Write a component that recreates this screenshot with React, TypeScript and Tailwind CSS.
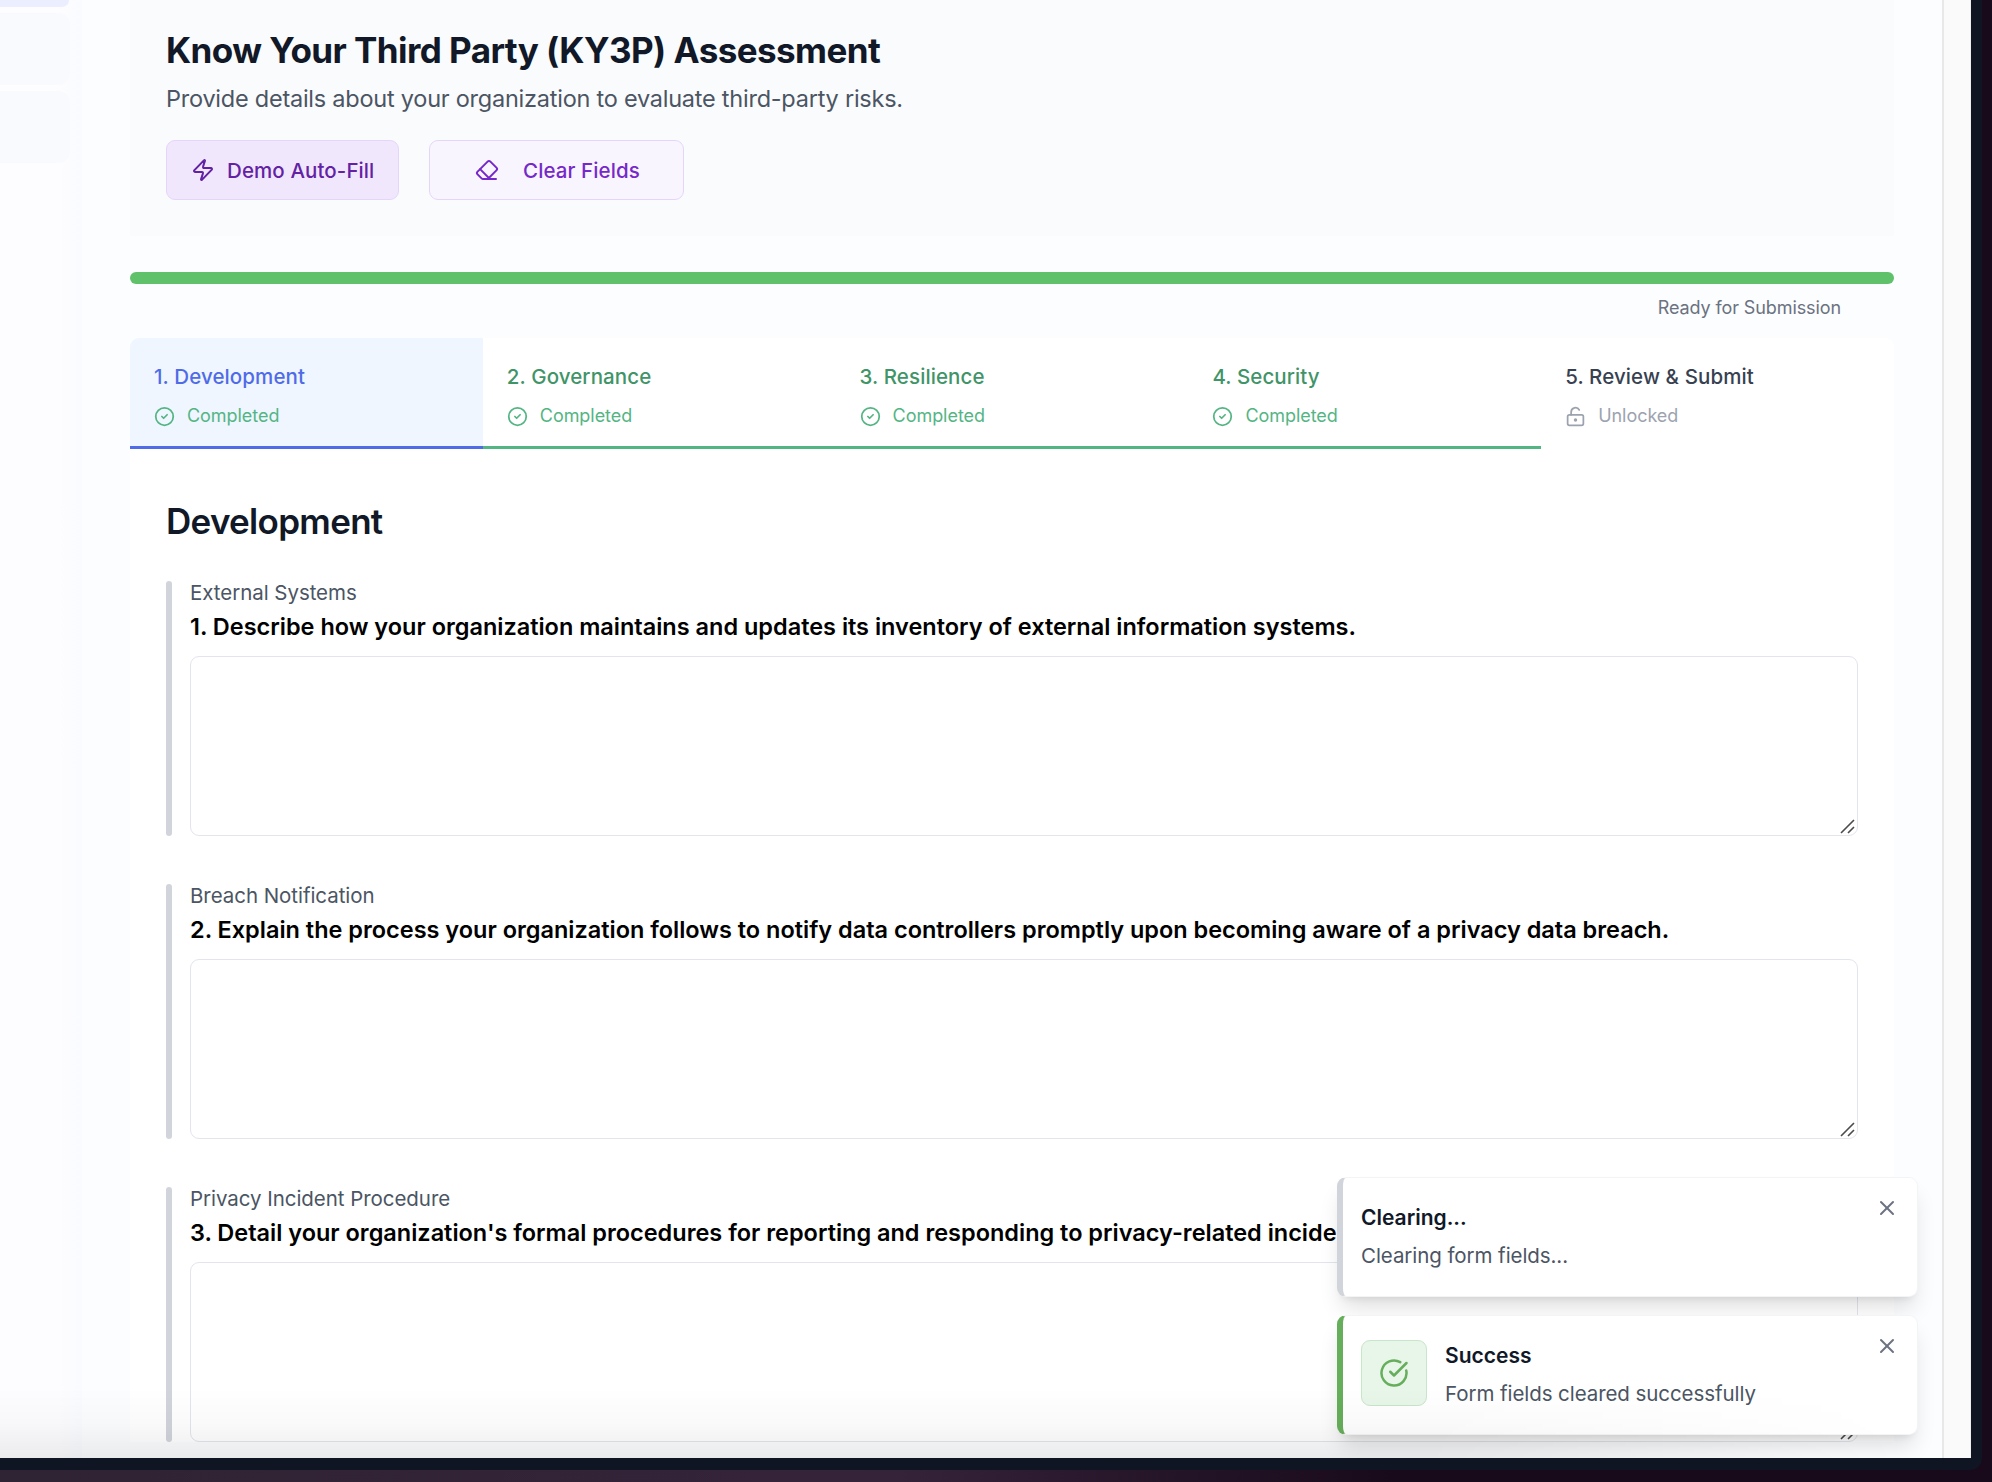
import React from "react";
import { CircleCheck, CircleCheckBig, Eraser, LockKeyholeOpen, X, Zap } from "lucide-react";

const tabs = [
  { title: "1. Development", state: "active" },
  { title: "2. Governance", state: "done" },
  { title: "3. Resilience", state: "done" },
  { title: "4. Security", state: "done" },
  { title: "5. Review & Submit", state: "open" },
];

const questions = [
  { label: "External Systems", text: "1. Describe how your organization maintains and updates its inventory of external information systems." },
  { label: "Breach Notification", text: "2. Explain the process your organization follows to notify data controllers promptly upon becoming aware of a privacy data breach." },
  { label: "Privacy Incident Procedure", text: "3. Detail your organization's formal procedures for reporting and responding to privacy-related incidents." },
];

function Sidebar() {
  return (
    <aside className="flex w-[82px] shrink-0 flex-col bg-linear-to-r from-[#fdfdff] from-70% to-[#fafbff]">
      <div className="h-[7px] w-[69px] rounded-br-xl bg-[#eaeeff]" />
      <div className="mt-[6px] h-[72px] w-[70px] rounded-r-xl bg-[#f9fafd]" />
      <div className="mt-[6px] h-[72px] w-[70px] rounded-r-xl bg-[#f9fafd]" />
    </aside>
  );
}

function Header() {
  return (
    <header className="h-[236px] shrink-0 bg-[#fafbfd] px-9 pt-[25px]">
      <h1 className="text-[35px] leading-[50px] font-bold tracking-[-0.56px] whitespace-nowrap text-[#111827]">
        Know Your Third Party (KY3P) Assessment
      </h1>
      <p className="mt-[6px] text-[23.5px] leading-[36px] tracking-[-0.24px] whitespace-nowrap text-[#4b5563]">
        Provide details about your organization to evaluate third-party risks.
      </p>
      <div className="mt-[23px] flex gap-[30px]">
        <button className="flex h-[60px] w-[233px] items-center gap-3 rounded-[9px] border border-[#e6d5fb] bg-[#f1e7fd] pl-6 text-[20.5px] font-medium tracking-[0.1px] whitespace-nowrap text-[#6322a3]">
          <Zap size={24} />
          <span className="pt-[2px]">Demo Auto-Fill</span>
        </button>
        <button className="flex h-[60px] w-[255px] items-center gap-6 rounded-[9px] border border-[#e6d5fb] bg-[#f9f5ff] pl-[45px] text-[20.5px] font-medium tracking-[0.1px] whitespace-nowrap text-[#7629c9]">
          <Eraser size={24} />
          <span className="pt-[2px]">Clear Fields</span>
        </button>
      </div>
    </header>
  );
}

function Tab({ title, state }: { title: string; state: string }) {
  const box =
    state === "active"
      ? "rounded-tl-[9px] border-[#4f6be8] bg-[#eff6ff]"
      : state === "done"
        ? "border-[#54b584]"
        : "border-transparent";
  const titleColor = state === "active" ? "text-[#4f6be8]" : state === "done" ? "text-[#3f9468]" : "text-[#374151]";
  return (
    <div className={"h-[111px] border-b-[3px] pt-[22px] pl-6 " + box}>
      <div className={"text-[20.5px] leading-[33px] font-medium tracking-[0.1px] whitespace-nowrap " + titleColor}>{title}</div>
      <div
        className={
          "mt-[11px] flex items-center gap-3 text-[18px] leading-6 tracking-[-0.05px] whitespace-nowrap " +
          (state === "open" ? "text-[#9ca3af]" : "text-[#54b584]")
        }
      >
        {state === "open" ? <LockKeyholeOpen size={21} /> : <CircleCheck size={21} />}
        {state === "open" ? "Unlocked" : "Completed"}
      </div>
    </div>
  );
}

function ResizeGrip() {
  return (
    <svg className="absolute right-[2px] bottom-[1px]" width="15" height="15" viewBox="0 0 15 15" fill="none" stroke="#4b4b4b" strokeWidth="1.6">
      <path d="M1 14 14 1M8 14l6-6" />
    </svg>
  );
}

function Question({ label, text }: { label: string; text: string }) {
  return (
    <section className="flex h-[255px] shrink-0 gap-[18px]">
      <div className="w-[6px] rounded-full bg-[#d1d5db]" />
      <div className="min-w-0 flex-1">
        <div className="h-[22px] text-[20.5px] leading-[23px] tracking-[-0.05px] whitespace-nowrap text-[#4b5563]">{label}</div>
        <h3 className="mt-[6px] h-9 text-[23.5px] leading-9 font-semibold tracking-[-0.01px] whitespace-nowrap text-black">{text}</h3>
        <div className="relative mt-[11px] h-[180px] rounded-[9px] border border-[#e2e5ec] bg-white">
          <ResizeGrip />
        </div>
      </div>
    </section>
  );
}

function Toast({ title, text, success }: { title: string; text: string; success?: boolean }) {
  return (
    <div
      className={
        "flex h-[120px] w-[581px] gap-[18px] rounded-[9px] border border-l-[6px] border-[#f3f4f6] bg-white pt-6 pl-[18px] shadow-[0_15px_22px_-4px_rgba(0,0,0,0.12),0_6px_9px_-6px_rgba(0,0,0,0.12)] " +
        (success ? "border-l-[#66ae5b]" : "border-l-[#d1d5db]")
      }
    >
      {success && (
        <div className="flex size-[66px] items-center justify-center rounded-[9px] border border-[#c8e6c9] bg-[#e8f5e9] text-[#66ae5b]">
          <CircleCheckBig size={30} />
        </div>
      )}
      <div className="flex-1 pt-px">
        <div className="text-[21px] leading-[30px] font-semibold text-[#111827]">{title}</div>
        <div className="mt-2 text-[20.5px] leading-[30px] tracking-[-0.07px] whitespace-nowrap text-[#4b5563]">{text}</div>
      </div>
      <X size={24} className="-mt-[6px] mr-[18px] text-[#6b7280]" />
    </div>
  );
}

export default function App() {
  return (
    <div className="h-[1482px] w-[1992px] overflow-hidden bg-linear-to-r from-[#2f2433] via-[#35233a] via-45% to-[#190a1b] to-70% font-['Inter',sans-serif]">
      <div className="relative flex h-[1470px] w-[1982px] overflow-hidden rounded-br-[12px] border-r-[11px] border-b-[12px] border-[#0f1523] bg-white">
        <Sidebar />
        <main className="flex h-[1458px] w-[1860px] flex-col overflow-hidden bg-[#fcfdff] px-12">
          <Header />
          <div className="mt-9 h-3 shrink-0 rounded-full bg-[#5fc26a]" />
          <div className="h-[54px] shrink-0 pt-[11px] pr-[53px] text-right text-[18px] leading-[26px] tracking-[-0.1px] text-[#6b7280]">
            Ready for Submission
          </div>
          <div className="flex shrink-0 flex-col rounded-t-[9px] bg-white">
            <div className="grid grid-cols-5">
              {tabs.map((t) => (
                <Tab key={t.title} {...t} />
              ))}
            </div>
            <div className="flex flex-col gap-12 px-9 pt-[48px]">
              <h2 className="h-[36px] text-[35px] leading-[49px] font-semibold tracking-[-0.7px] text-[#111827]">Development</h2>
              {questions.map((q) => (
                <Question key={q.label} {...q} />
              ))}
            </div>
          </div>
        </main>
        <div className="h-[1458px] flex-1 border-r border-l-2 border-r-[#efefef] border-l-[#e8e8e8] bg-[#fafafa]" />
        <div className="absolute bottom-[23px] left-[1337px] flex flex-col gap-[18px]">
          <Toast title="Clearing..." text="Clearing form fields..." />
          <Toast title="Success" text="Form fields cleared successfully" success />
        </div>
        <div className="absolute bottom-0 left-0 h-[70px] w-[1900px] bg-linear-to-t from-black/7 via-black/2 to-transparent [mask-image:linear-gradient(to_right,black_75%,transparent)]" />
      </div>
    </div>
  );
}
